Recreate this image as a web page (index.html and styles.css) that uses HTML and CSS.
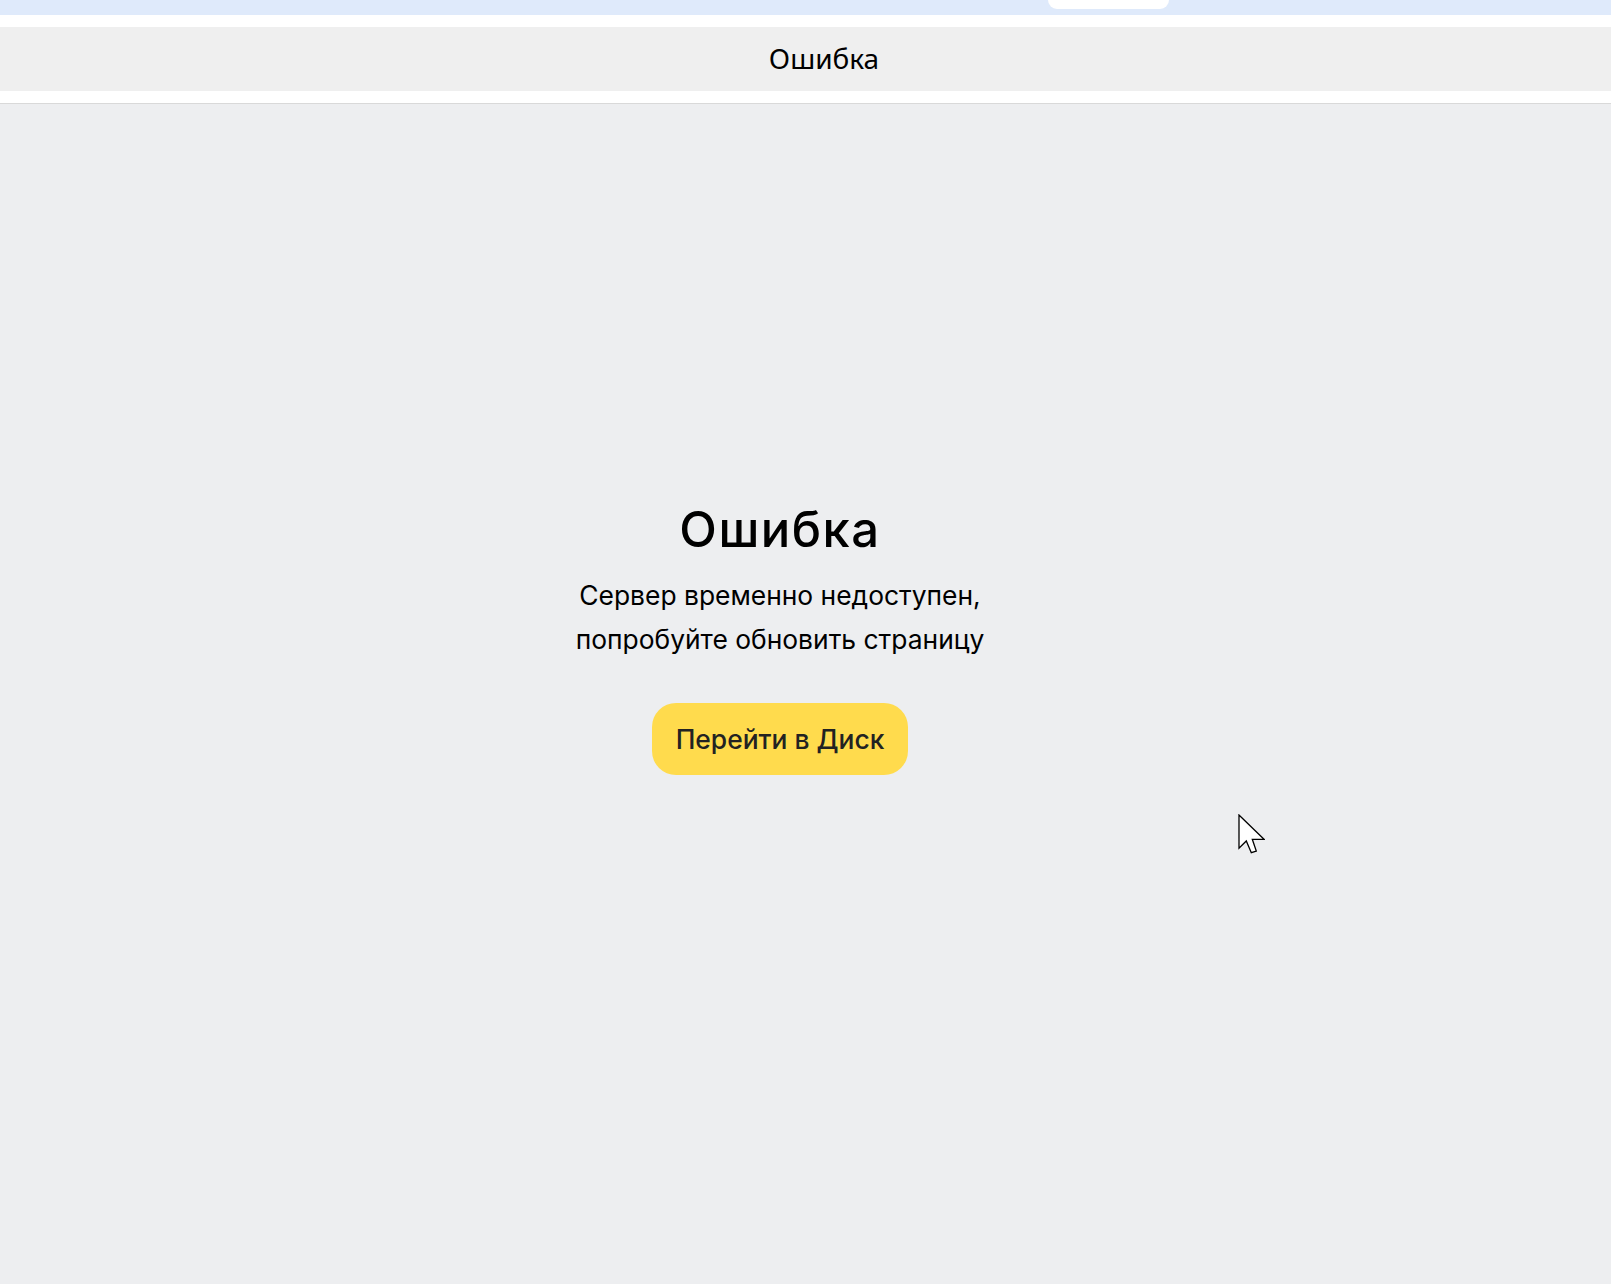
FILE: index.html
```html
<!DOCTYPE html>
<html lang="ru">
<head>
<meta charset="utf-8">
<title>Ошибка</title>
<link rel="stylesheet" href="styles.css">
</head>
<body>
<div class="topbar"><div class="tab"></div></div>
<div class="gap"></div>
<div class="titlebar"><span class="title">Ошибка</span></div>
<div class="gap gap-bottom"></div>
<main class="main">
  <div class="error">
    <h1 class="error-title">Ошибка</h1>
    <p class="error-text">Сервер временно недоступен,<br>попробуйте обновить страницу</p>
    <a class="btn" href="#">Перейти в Диск</a>
  </div>
  <svg class="cursor" width="27" height="40" viewBox="0 0 27 40" aria-hidden="true">
    <path d="M1 1 L1 34.3 L8.3 27 L13.3 38.7 L18.3 37 L14.3 25.3 L26 25.3 Z" fill="#fff" stroke="#000" stroke-width="1.3" stroke-linejoin="miter"/>
  </svg>
</main>
</body>
</html>
```
FILE: styles.css
```css
html, body {
  margin: 0;
  padding: 0;
}
body {
  background: #edeef0;
  font-family: "Inter", "Noto Sans", sans-serif;
  color: #000;
  min-height: 1284px;
}
.topbar {
  height: 15px;
  background: #dfeafb;
  display: flex;
}
.tab {
  margin-left: 1048px;
  width: 121px;
  height: 9px;
  background: #fff;
  border-radius: 0 0 9px 9px;
}
.gap {
  height: 12px;
  background: #fff;
}
.gap-bottom {
  border-bottom: 1px solid #d9d9d9;
}
.titlebar {
  height: 64px;
  box-sizing: border-box;
  padding: 0 0 3px 37px;
  background: #efefef;
  display: flex;
  align-items: center;
  justify-content: center;
}
.title {
  font-family: "Noto Sans", "Open Sans", sans-serif;
  font-size: 28px;
  color: #000;
}
.main {
  position: relative;
  display: flex;
  justify-content: center;
  padding-right: 51px;
  padding-top: 398px;
  height: 782px;
}
.error {
  display: flex;
  flex-direction: column;
  align-items: center;
  text-align: center;
}
.error-title {
  margin: 0;
  font-size: 49px;
  line-height: 56px;
  font-weight: 500;
  letter-spacing: 1.5px;
}
.error-text {
  margin: 16px 0 0;
  font-size: 26.4px;
  line-height: 43.5px;
}
.btn {
  margin-top: 42px;
  display: flex;
  align-items: center;
  height: 72px;
  padding: 0 24px;
  border-radius: 24px;
  background: #ffdb4d;
  color: #222;
  font-size: 26.4px;
  font-weight: 500;
  text-decoration: none;
}
.cursor {
  position: absolute;
  left: 1238px;
  top: 710px;
}
```
